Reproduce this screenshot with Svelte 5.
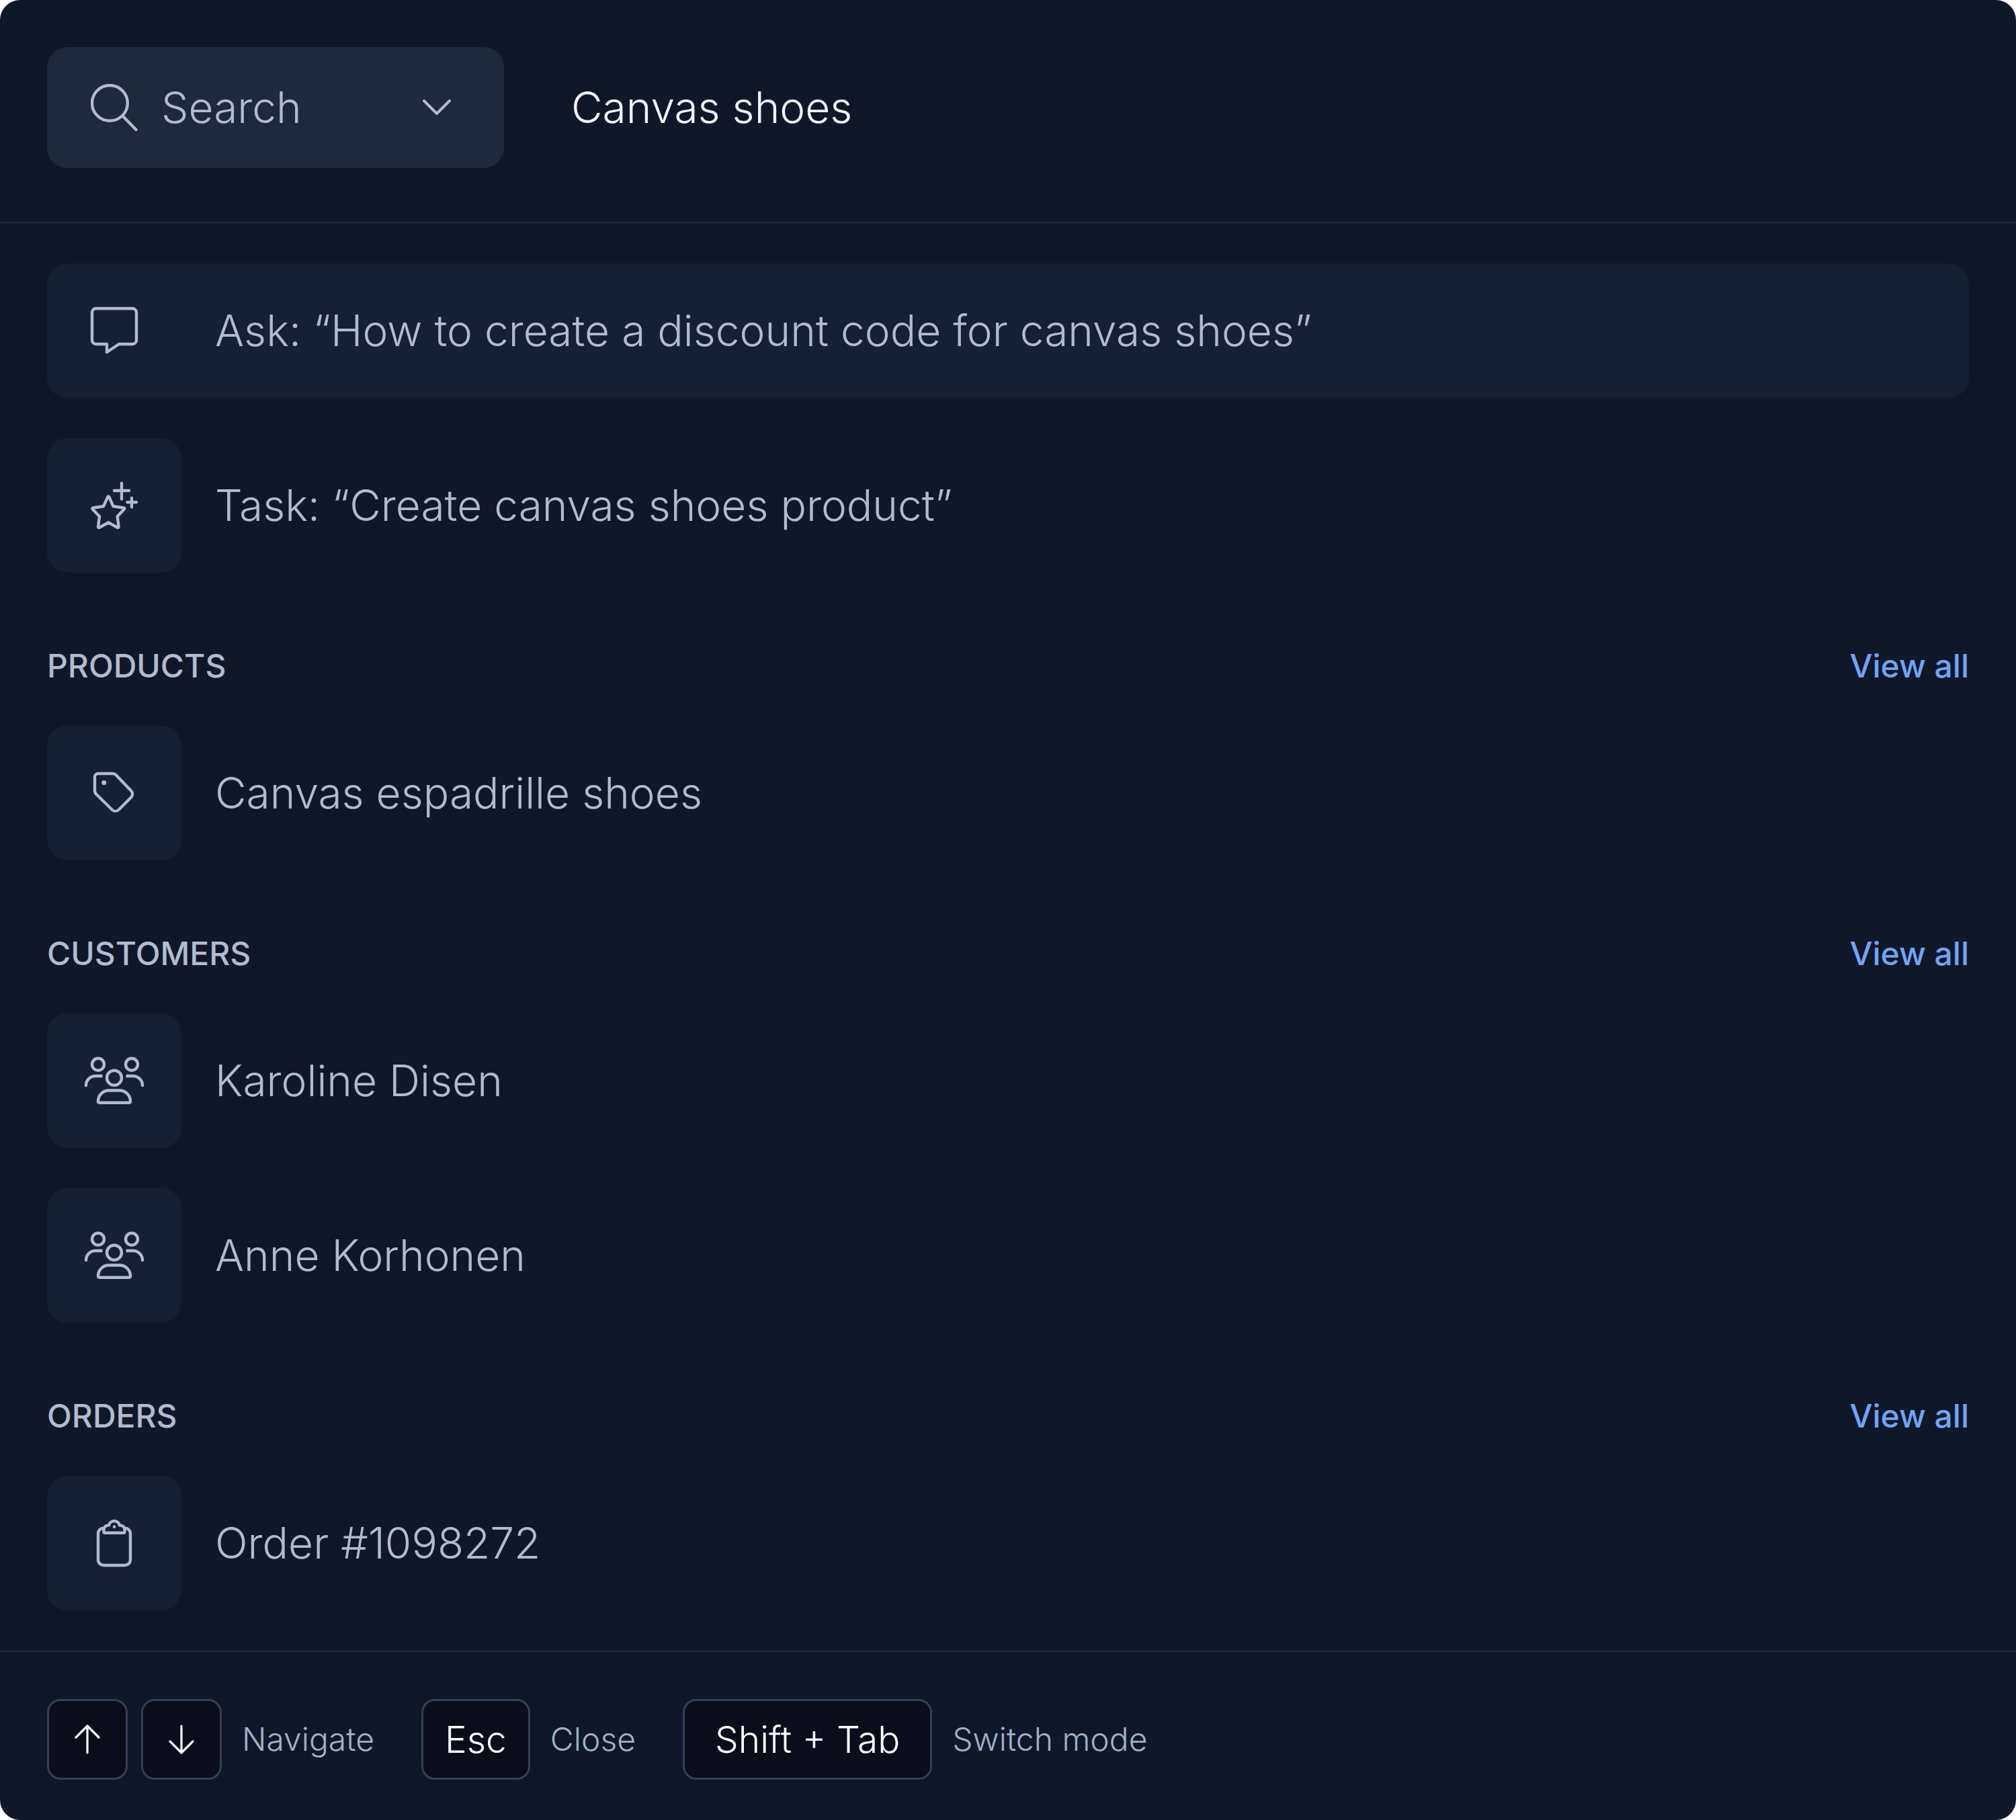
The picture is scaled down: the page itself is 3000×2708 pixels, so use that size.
<script>
  let query = $state("Canvas shoes");
  let mode = $state("Search");

  const suggestions = [
    {
      icon: "chat",
      text: "Ask: “How to create a discount code for canvas shoes”",
      active: true,
    },
    { icon: "star", text: "Task: “Create canvas shoes product”" },
  ];

  const sections = [
    {
      title: "Products",
      items: [{ icon: "tag", text: "Canvas espadrille shoes" }],
    },
    {
      title: "Customers",
      items: [
        { icon: "users", text: "Karoline Disen" },
        { icon: "users", text: "Anne Korhonen" },
      ],
    },
    {
      title: "Orders",
      items: [{ icon: "clipboard", text: "Order #1098272" }],
    },
  ];
</script>

{#snippet icon(name)}
  <svg class="icon" viewBox="0 0 100 100" stroke-width="4.4" aria-hidden="true">
    {#if name === "chat"}
      <path
        d="M23 17h54a6 6 0 0 1 6 6v41a6 6 0 0 1-6 6H57L39 82V70H23a6 6 0 0 1-6-6V23a6 6 0 0 1 6-6z"
      />
    {:else if name === "star"}
      <path
        d="M40.4 37.200q.9-1.200 1.800 0L48.500 51.300 64.400 53.700q1.400.8.6 1.800L54.700 66.300 56.600 82q-.5 1.400-1.700 1L41.300 75.500 27.700 83q-1.200.4-1.700-1L28 66.300 17.600 55.500q-.8-1 .6-1.800L34 51.300z"
      />
      <path d="M61 17v23.500M50 28h22M76 39v13.500M69.500 45.300h13.500" />
    {:else if name === "tag"}
      <path
        d="M26 21h21.500a7 7 0 0 1 5 2L75 46.500a7 7 0 0 1 0 10L56.500 75a7 7 0 0 1-9.500 0L23 51.500a6 6 0 0 1-2-4.500V26a5 5 0 0 1 5-5z"
      />
      <circle class="dot" cx="34.7" cy="34.5" r="3.5" />
    {:else if name === "users"}
      <circle cx="26" cy="25.7" r="9" />
      <circle cx="76" cy="25.7" r="9" />
      <circle cx="50" cy="45.7" r="11" />
      <path
        d="M26 80.500a16 16 0 0 1 16-16h16a16 16 0 0 1 16 16c0 1.300-.7 2.200-2 2.200H28c-1.300 0-2-.9-2-2.200z"
      />
      <path class="butt" d="M8 57a14 14 0 0 1 14-14h10.500M67.500 43H78a14 14 0 0 1 14 14" />
      <path d="M8 57v0M92 57v0" />
    {:else if name === "clipboard"}
      <path
        d="M34.500 27.700H34a8 8 0 0 0-8 8V75a8 8 0 0 0 8 8h32a8 8 0 0 0 8-8V35.700a8 8 0 0 0-8-8h-.5"
      />
      <path
        d="M36 34.700c-1 0-1.500-.5-1.500-1.500V30a6.500 6.500 0 0 1 6.500-6.500h1a8.200 8.200 0 0 1 16 0h1a6.500 6.500 0 0 1 6.500 6.500v3.200c0 1-.5 1.500-1.500 1.500z"
      />
      <circle class="dot" cx="50" cy="25.7" r="2.3" />
    {/if}
  </svg>
{/snippet}

{#snippet row(item)}
  <a class="row" class:active={item.active} href="#result">
    <span class="tile">{@render icon(item.icon)}</span>
    <span>{item.text}</span>
  </a>
{/snippet}

<div class="palette">
  <header>
    <label class="mode">
      <svg class="glass" viewBox="0 0 70 70" stroke-width="4.4" aria-hidden="true">
        <circle cx="28.4" cy="28.4" r="26.4" />
        <path d="M47.500 47.500 67.500 68" />
      </svg>
      <select bind:value={mode} aria-label="Mode">
        <option>Search</option>
        <option>Ask</option>
        <option>Task</option>
      </select>
      <svg class="chevron" viewBox="0 0 44 44" stroke-width="4" aria-hidden="true">
        <path d="M3 12 22 31 41 12" />
      </svg>
    </label>
    <input type="text" aria-label="Query" bind:value={query} />
  </header>

  <main>
    <div class="list">
      {#each suggestions as item}
        {@render row(item)}
      {/each}
    </div>

    {#each sections as section}
      <section>
        <div class="heading">
          <h2>{section.title}</h2>
          <a href="#all">View all</a>
        </div>
        <div class="list">
          {#each section.items as item}
            {@render row(item)}
          {/each}
        </div>
      </section>
    {/each}
  </main>

  <footer>
    <div class="hint">
      <div class="keys">
        <kbd class="arrow">
          <svg viewBox="0 0 48 48" stroke-width="3.2" role="img" aria-label="Up">
            <path d="M24 44V5M7 21 24 4 41 21" />
          </svg>
        </kbd>
        <kbd class="arrow">
          <svg viewBox="0 0 48 48" stroke-width="3.2" role="img" aria-label="Down">
            <path d="M24 4V43M7 27 24 44 41 27" />
          </svg>
        </kbd>
      </div>
      <span>Navigate</span>
    </div>
    <div class="hint">
      <kbd>Esc</kbd>
      <span>Close</span>
    </div>
    <div class="hint">
      <kbd class="combo">Shift + Tab</kbd>
      <span>Switch mode</span>
    </div>
  </footer>
</div>

<style>
  :global(body) {
    margin: 0;
    background: #fff;
  }

  .palette {
    overflow: hidden;
    border-radius: 30px;
    background: #101728;
    color: #b1bbcf;
    font-family: Inter, sans-serif;
    font-size: 64px;
    font-weight: 300;
    line-height: 80px;
  }

  header {
    display: flex;
    align-items: center;
    gap: 100px;
    padding: 70px 70px 80px;
    border-bottom: 2px solid #1e293b;
  }

  .mode {
    display: flex;
    align-items: center;
    box-sizing: border-box;
    width: 680px;
    height: 180px;
    padding: 0 78px 0 65px;
    border-radius: 30px;
    background: #1e293b;
  }

  select,
  input {
    flex: 1;
    min-width: 0;
    margin: 0;
    padding: 0;
    border: none;
    outline: none;
    background: none;
    font: inherit;
    color: inherit;
    line-height: 80px;
  }

  select {
    appearance: none;
    padding-left: 35px;
  }

  input {
    color: #f1f3fb;
  }

  svg {
    flex: none;
    fill: none;
    stroke: currentColor;
    stroke-linecap: round;
    stroke-linejoin: round;
  }

  .glass {
    width: 70px;
    height: 70px;
  }

  .chevron {
    width: 44px;
    height: 44px;
    pointer-events: none;
  }

  .icon {
    width: 100px;
    height: 100px;
  }

  .dot {
    fill: currentColor;
    stroke: none;
  }

  .butt {
    stroke-linecap: butt;
  }

  main {
    padding: 60px 70px;
  }

  .list {
    display: flex;
    flex-direction: column;
    gap: 60px;
  }

  .row {
    display: flex;
    align-items: center;
    gap: 50px;
    border-radius: 30px;
    color: inherit;
    text-decoration: none;
  }

  .row.active,
  .tile {
    background: #162033;
  }

  .tile {
    display: flex;
    align-items: center;
    justify-content: center;
    width: 200px;
    height: 200px;
    border-radius: 30px;
  }

  .heading {
    display: flex;
    justify-content: space-between;
    padding: 110px 0 60px;
    font-size: 48px;
    font-weight: 500;
    line-height: 58px;
  }

  h2 {
    margin: 0;
    font: inherit;
    text-transform: uppercase;
  }

  .heading a {
    color: #72a3f7;
    text-decoration: none;
  }

  footer {
    display: flex;
    gap: 70px;
    padding: 70px 70px 60px;
    border-top: 2px solid #1e293b;
    font-size: 48px;
    color: #9fb1c9;
  }

  .hint {
    display: flex;
    align-items: center;
    gap: 30px;
  }

  .keys {
    display: flex;
    gap: 20px;
  }

  kbd {
    display: flex;
    align-items: center;
    justify-content: center;
    box-sizing: border-box;
    height: 120px;
    padding: 0 32px;
    border: 3px solid #334155;
    border-radius: 20px;
    background: #0b0d1b;
    color: #fff;
    font-family: inherit;
    font-size: 55px;
  }

  kbd.combo {
    padding: 0 45px;
  }

  kbd.arrow {
    width: 120px;
    padding: 0;
  }

  kbd svg {
    width: 48px;
    height: 48px;
  }
</style>
